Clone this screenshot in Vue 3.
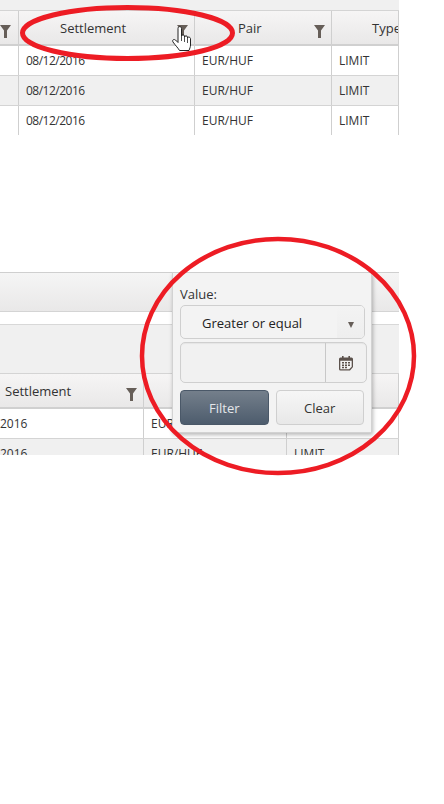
<template>
  <div class="page">
    <section class="grid-panel top-panel">
      <div class="strip"></div>
      <div class="row head top-cols">
        <div v-for="col in topCols" :key="col.label" class="cell" :style="{ paddingLeft: col.pad + 'px' }">
          <span>{{ col.label }}</span>
          <svg v-if="col.filter" class="funnel" viewBox="0 0 11 13"><path d="M0 0h11L7 5.500V13H4V5.500z" /></svg>
        </div>
      </div>
      <div v-for="(r, i) in 3" :key="r" class="row body top-cols" :class="{ alt: i === 1 }">
        <div class="cell"></div>
        <div class="cell date">08/12/2016</div>
        <div class="cell">EUR/HUF</div>
        <div class="cell">LIMIT</div>
      </div>
    </section>

    <section class="grid-panel bottom-panel">
      <div class="toolbar"></div>
      <div class="spacer"></div>
      <div class="group-bar"></div>
      <div class="row head bottom-cols">
        <div class="cell settle">
          <span>Settlement</span>
          <svg class="funnel" viewBox="0 0 11 13"><path d="M0 0h11L7 5.500V13H4V5.500z" /></svg>
        </div>
        <div class="cell"></div>
        <div class="cell"></div>
      </div>
      <div class="row body bottom-cols">
        <div class="cell flush">2016</div>
        <div class="cell">EUR/HUF</div>
        <div class="cell"></div>
      </div>
      <div class="row body alt cut bottom-cols">
        <div class="cell flush">2016</div>
        <div class="cell">EUR/HUF</div>
        <div class="cell">LIMIT</div>
      </div>

      <div class="popup">
        <label class="popup-label">Value:</label>
        <div class="select">
          <span class="select-text">Greater or equal</span>
          <span class="select-arrow"><i></i></span>
        </div>
        <div class="date-input">
          <div class="date-field"></div>
          <div class="date-addon">
            <svg width="16" height="16" viewBox="0 0 16 16">
              <path d="M2.500 2.500h11a1.500 1.500 0 0 1 1.500 1.500v8l-3 3.500H2.500A1.500 1.500 0 0 1 1 14V4a1.500 1.500 0 0 1 1.500-1.500z" fill="#5c524c" />
              <path d="M2.300 5.800h11.400v6l-2.600 2.500H2.300z" fill="#f3f3f3" />
              <rect x="4" y="1" width="1.600" height="3" fill="#5c524c" />
              <rect x="10.400" y="1" width="1.600" height="3" fill="#5c524c" />
              <path d="M4 7h2v1.600H4zM7 7h2v1.600H7zM10 7h2v1.600h-2zM4 9.400h2V11H4zM7 9.400h2V11H7zM10 9.400h2V11h-2zM4 11.800h2v1.500H4zM7 11.800h2v1.500H7z" fill="#5c524c" />
            </svg>
          </div>
        </div>
        <div class="actions">
          <button type="button" class="btn btn-primary">Filter</button>
          <button type="button" class="btn btn-default">Clear</button>
        </div>
      </div>
    </section>

    <svg class="marks" width="444" height="804" viewBox="0 0 444 804">
      <ellipse class="thick" cx="127.500" cy="33" rx="105" ry="25.500" />
      <ellipse cx="278" cy="356" rx="136" ry="117" />
      <path class="hand" d="M178 28.500c0-2.500 3.500-2.500 3.500 0v7.500c0-1.500 3-1.500 3 0v1c0-1.500 3-1.500 3 0v1c0-1.500 3-1 3 .5v6.500c0 2-.8 3.500-1.500 5.500h-9.500c-1-2-4-5-6.500-8.500-1.200-2 .8-3.200 2.500-2l2.500 2.500z" />
      <path class="hand-line" d="M181.500 36v5M184.500 37v5M187.500 38v5" />
    </svg>
  </div>
</template>

<script setup>
const topCols = [
  { label: '', pad: 0, filter: true },
  { label: 'Settlement', pad: 41, filter: true },
  { label: 'Pair', pad: 43, filter: true },
  { label: 'Type', pad: 40, filter: false }
]
</script>

<style>
html,
body {
  margin: 0;
  background: #fff;
}
</style>

<style scoped>
.page {
  position: relative;
  width: 444px;
  height: 804px;
  overflow: hidden;
  background: #fff;
  font-family: "Open Sans", "Noto Sans", sans-serif;
  color: #333;
}

.grid-panel {
  width: 399px;
  overflow: hidden;
}

.top-panel {
  height: 135px;
}

.bottom-panel {
  position: relative;
  height: 183px;
  margin-top: 137px;
}

.strip {
  height: 10px;
  background: #f0f0f0;
  border-bottom: 1px solid #d4d4d4;
}

.toolbar {
  height: 38px;
  border-top: 1px solid #cfcfcf;
  border-bottom: 1px solid #d4d4d4;
  background: linear-gradient(#f5f5f5, #e9e8e8);
}

.spacer {
  height: 12px;
}

.group-bar {
  height: 48px;
  border-top: 1px solid #d8d8d8;
  border-bottom: 1px solid #d4d4d4;
  background: #f0f0f0;
}

.row {
  display: grid;
}

.top-cols {
  grid-template-columns: 19px 176px 137px 67px;
}

.bottom-cols {
  grid-template-columns: 144px 143px 112px;
}

.head {
  height: 33px;
  border-bottom: 2px solid #d0d0d0;
  background: linear-gradient(#f6f5f5, #e9e8e8);
  font-size: 13px;
}

.head .cell {
  position: relative;
  padding-top: 8px;
  line-height: 18px;
}

.body {
  height: 29px;
  border-bottom: 1px solid #d4d4d4;
  background: #fff;
  font-size: 12px;
  line-height: 30px;
}

.body.alt {
  background: #f0f0f0;
}

.body.cut {
  height: 17px;
  border-bottom: 0;
}

.cell {
  min-width: 0;
  overflow: hidden;
  white-space: nowrap;
  box-sizing: border-box;
  border-right: 1px solid #cfcfcf;
}

.body .cell {
  padding-left: 7px;
}

.body .date {
  letter-spacing: -0.5px;
}

.body .flush {
  padding-left: 0;
}

.head .settle {
  padding-left: 5px;
}

.funnel {
  position: absolute;
  top: 14px;
  right: 6px;
  width: 11px;
  height: 13px;
  fill: #665e58;
}

.top-cols .cell:first-child .funnel {
  right: 7px;
}

.popup {
  position: absolute;
  top: 0;
  left: 172px;
  box-sizing: border-box;
  width: 200px;
  height: 161px;
  padding: 12px 7px 0;
  border: 1px solid #d2d2d2;
  border-top-color: #cfcfcf;
  background: #f3f3f3;
  box-shadow: 1px 2px 4px rgba(0, 0, 0, 0.28);
}

.popup-label {
  display: block;
  font-size: 13px;
  line-height: 18px;
  margin-bottom: 2px;
}

.select {
  display: flex;
  align-items: stretch;
  box-sizing: border-box;
  width: 185px;
  height: 34px;
  overflow: hidden;
  border: 1px solid #cfcfcf;
  border-radius: 5px;
  background: #f3f3f3;
  font-size: 13px;
  line-height: 33px;
}

.select-text {
  flex: 1;
  padding: 1px 0 0 21px;
  color: #222;
}

.select-arrow {
  display: flex;
  align-items: center;
  justify-content: center;
  width: 27px;
  padding-top: 5px;
  box-sizing: border-box;
  background: linear-gradient(#f3f3f3, #eeeeee);
}

.select-arrow i {
  width: 0;
  height: 0;
  border-left: 3.500px solid transparent;
  border-right: 3.500px solid transparent;
  border-top: 6px solid #665e58;
}

.date-input {
  display: flex;
  box-sizing: border-box;
  width: 187px;
  height: 41px;
  margin-top: 3px;
  border: 1px solid #cfcfcf;
  border-radius: 5px;
  background: #f1f1f1;
  box-shadow: inset 0 1px 1px rgba(0, 0, 0, 0.05);
}

.date-field {
  flex: 1;
}

.date-addon {
  display: flex;
  align-items: center;
  justify-content: center;
  width: 40px;
  border-left: 1px solid #c8c8c8;
}

.actions {
  display: flex;
  gap: 7px;
  margin-top: 7px;
}

.btn {
  box-sizing: border-box;
  width: 89px;
  height: 35px;
  padding: 0;
  border-radius: 4px;
  font-family: inherit;
  font-size: 13px;
  cursor: pointer;
}

.btn-primary {
  border: 1px solid #4a5868;
  background: linear-gradient(#747f8b, #4d5c6d);
  color: #e4e7ea;
}

.btn-default {
  border: 1px solid #cfcfcf;
  background: linear-gradient(#f6f6f6, #e8e8e8);
  color: #333;
}

.marks {
  position: absolute;
  top: 0;
  left: 0;
  pointer-events: none;
}

.marks ellipse {
  fill: none;
  stroke: #ed1c24;
  stroke-width: 4.5;
}

.marks ellipse.thick {
  stroke-width: 5;
}

.marks .hand {
  fill: #fff;
  stroke: #222;
  stroke-width: 1;
}

.marks .hand-line {
  fill: none;
  stroke: #222;
  stroke-width: 0.8;
}
</style>
